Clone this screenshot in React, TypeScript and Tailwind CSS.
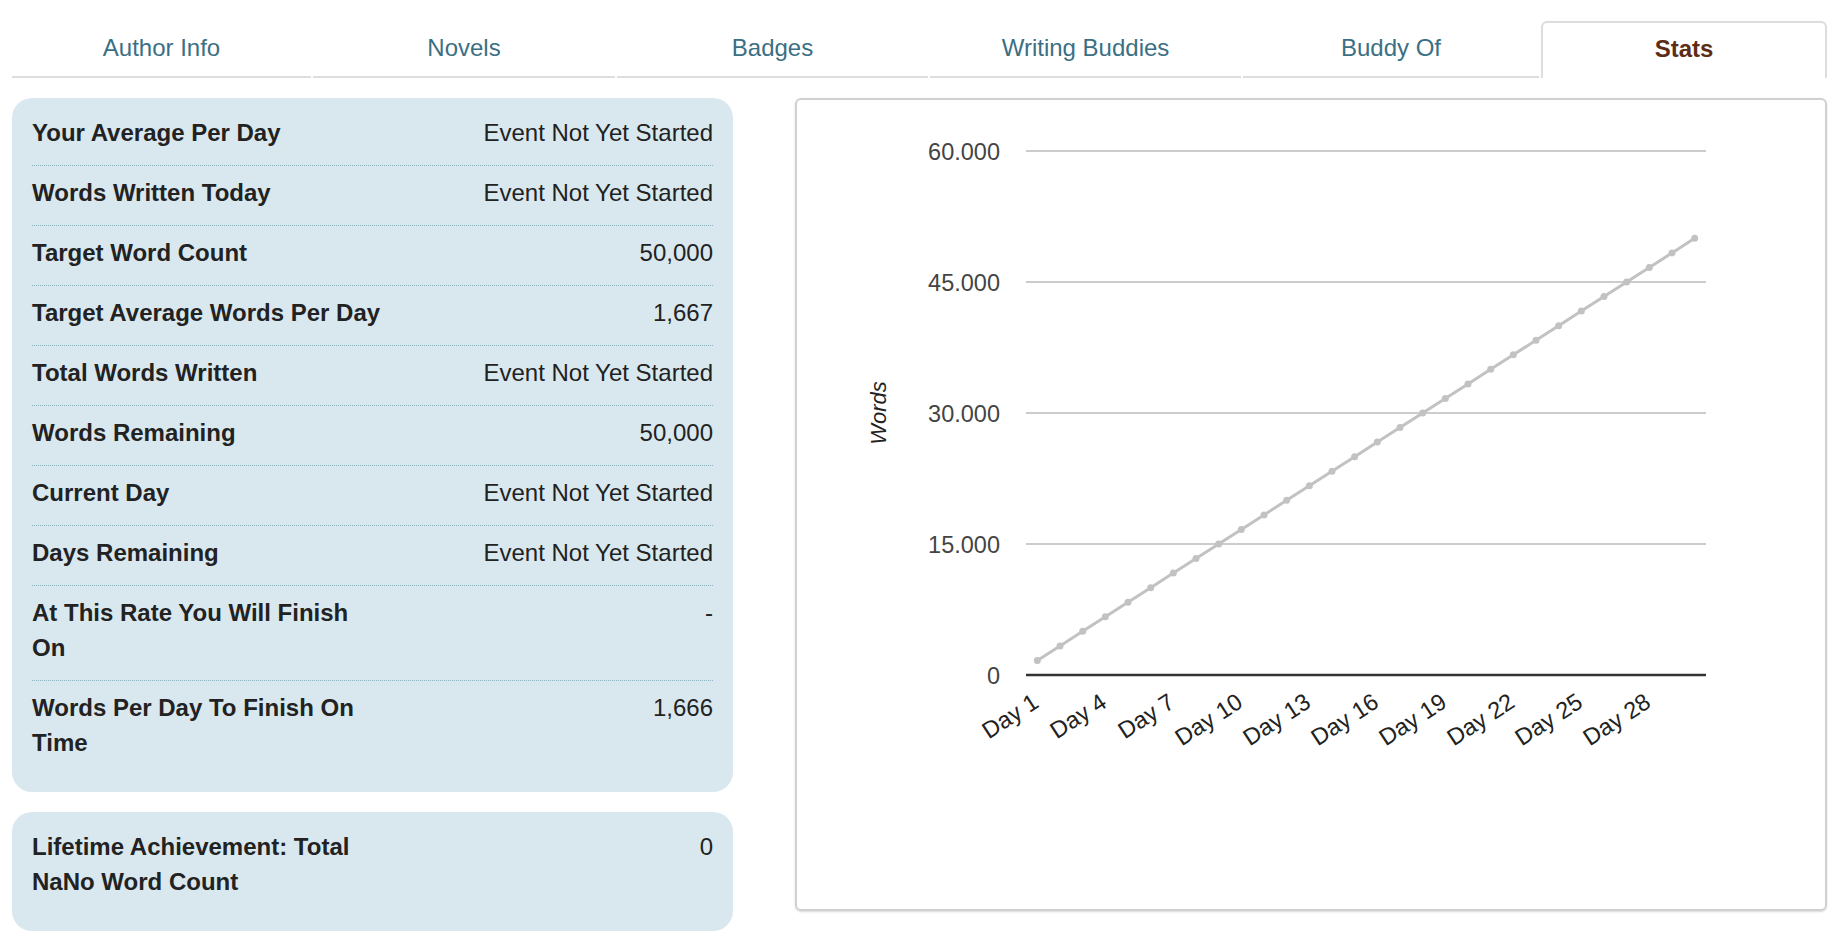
import React from 'react';

const tabs = [
    { label: 'Author Info', width: 'w-[299px]' },
    { label: 'Novels', width: 'w-[302px]' },
    { label: 'Badges', width: 'w-[311px]' },
    { label: 'Writing Buddies', width: 'w-[311px]' },
    { label: 'Buddy Of', width: 'w-[296px]' },
    { label: 'Stats', width: 'w-[286px]', active: true },
];

const stats = [
    ['Your Average Per Day', 'Event Not Yet Started'],
    ['Words Written Today', 'Event Not Yet Started'],
    ['Target Word Count', '50,000'],
    ['Target Average Words Per Day', '1,667'],
    ['Total Words Written', 'Event Not Yet Started'],
    ['Words Remaining', '50,000'],
    ['Current Day', 'Event Not Yet Started'],
    ['Days Remaining', 'Event Not Yet Started'],
    ['At This Rate You Will Finish On', '-'],
    ['Words Per Day To Finish On Time', '1,666'],
];

function StatRow({ label, value, last }: { label: string; value: string; last?: boolean }) {
    return (
        <div className={`flex justify-between items-start pt-[9px] pb-[15px] ${last ? '' : 'border-b border-dotted border-[#8fb4c2]'}`}>
            <div className="w-[355px] font-bold">{label}</div>
            <div className="text-right">{value}</div>
        </div>
    );
}

// word count chart, drawn by hand (30 days, straight line to 50k)
function WordsChart() {
    const left = 229;
    const right = 909;
    const zeroY = 575;
    const step = (right - left) / 30;
    const ticks = [0, 15000, 30000, 45000, 60000];
    const yOf = (v: number) => zeroY - (v / 60000) * 524;
    const points = Array.from({ length: 30 }, (_, i) => ({
        x: left + (i + 0.5) * step,
        y: yOf(Math.round((50000 * (i + 1)) / 30)),
    }));
    const dayLabels = [1, 4, 7, 10, 13, 16, 19, 22, 25, 28];

    return (
        <svg width="1028" height="809" viewBox="0 0 1028 809" className="block">
            {ticks.map(t => (
                <g key={t}>
                    {t !== 0 && <line x1={left} x2={right} y1={yOf(t)} y2={yOf(t)} stroke="#cccccc" strokeWidth="2" />}
                    <text x="203" y={yOf(t) + 8.5} fontSize="23.5" fill="#444444" textAnchor="end">
                        {t === 0 ? '0' : t.toLocaleString('en-US').replace(',', '.')}
                    </text>
                </g>
            ))}
            <line x1={left} x2={right} y1={zeroY} y2={zeroY} stroke="#333333" strokeWidth="2.5" />
            <text x="81" y="313" fontSize="22" fontStyle="italic" fill="#222222" textAnchor="middle" dominantBaseline="central" transform="rotate(-90 81 313)">
                Words
            </text>
            <polyline
                points={points.map(p => `${p.x},${p.y}`).join(' ')}
                fill="none"
                stroke="#c2c2c2"
                strokeWidth="3"
            />
            {points.map((p, i) => (
                <circle key={i} cx={p.x} cy={p.y} r="3.5" fill="#c2c2c2" />
            ))}
            {dayLabels.map(d => {
                const x = left + (d - 0.5) * step + 3;
                const y = 606;
                return (
                    <text key={d} x={x} y={y} fontSize="23.5" fill="#222222" textAnchor="end" transform={`rotate(-33 ${x} ${y})`}>
                        Day {d}
                    </text>
                );
            })}
        </svg>
    );
}

export default function App() {
    return (
        <div className="min-h-screen bg-white font-['Liberation_Sans',Arial,sans-serif] text-[24px] text-[#222] pl-[12px] pr-[21px] pt-[21px]">
            {/* Tabs */}
            <div className="flex gap-[2px]">
                {tabs.map(tab => (
                    <div
                        key={tab.label}
                        className={`${tab.width} h-[57px] flex items-center justify-center ${
                            tab.active
                                ? 'border-2 border-b-0 border-[#dddddd] rounded-t-[6px] font-bold text-[#5a2d14] pb-[4px]'
                                : 'border-b-2 border-[#dddddd] text-[#3b6f84] pb-[2px]'
                        }`}
                    >
                        {tab.label}
                    </div>
                ))}
            </div>

            <div className="flex gap-[62px] mt-[20px] items-start">
                {/* Stats tables */}
                <div className="w-[721px] flex flex-col gap-[20px] leading-[35px]">
                    <div className="bg-[#d9e8ef] rounded-[20px] px-[20px] pt-[8px] pb-[17px]">
                        {stats.map(([label, value], i) => (
                            <StatRow key={label} label={label} value={value} last={i === stats.length - 1} />
                        ))}
                    </div>
                    <div className="bg-[#d9e8ef] rounded-[20px] px-[20px] pt-[8px] pb-[17px]">
                        <StatRow label="Lifetime Achievement: Total NaNo Word Count" value="0" last />
                    </div>
                </div>

                {/* Chart */}
                <div className="w-[1032px] h-[813px] border-2 border-[#d0d0d0] rounded-[6px] shadow-[0_1px_2px_rgba(0,0,0,0.15)] overflow-hidden">
                    <WordsChart />
                </div>
            </div>
        </div>
    );
}
